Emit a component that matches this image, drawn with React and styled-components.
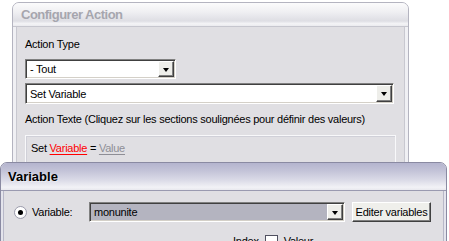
import React from 'react';
import styled, { createGlobalStyle } from 'styled-components';

const GlobalStyle = createGlobalStyle`
  html, body {
    margin: 0;
    padding: 0;
    background: #ffffff;
    overflow: hidden;
  }
  body {
    font-family: 'Liberation Sans', Arial, sans-serif;
    font-size: 11px;
    letter-spacing: -0.25px;
    color: #000;
  }
`;

const Desktop = styled.div`
  position: relative;
  width: 449px;
  height: 241px;
  overflow: hidden;
  background: #ffffff;
`;

// windows sit on a free desktop, so their place is the content itself
const Window = styled.div`
  position: absolute;
  left: ${p => p.$x}px;
  top: ${p => p.$y}px;
  width: ${p => p.$w}px;
  height: ${p => p.$h}px;
  display: flex;
  flex-direction: column;
  box-sizing: border-box;
  border: 1px solid ${p => (p.$active ? '#8a8aa2' : '#b4b4c0')};
  border-radius: 7px 7px 0 0;
  background: ${p => (p.$active ? '#e4e4ec' : '#f0f0f4')};
  overflow: hidden;
`;

const TitleBar = styled.div`
  flex: 0 0 ${p => p.$h}px;
  display: flex;
  align-items: center;
  padding-left: ${p => p.$pad}px;
  font-weight: bold;
  font-size: 13px;
  letter-spacing: ${p => (p.$active ? '0px' : '-0.5px')};
  color: ${p => (p.$active ? '#000000' : '#a6a6ae')};
  text-shadow: ${p => (p.$active ? '1px 1px 0 rgba(255,255,255,0.4)' : 'none')};
  background: ${p =>
    p.$active
      ? 'linear-gradient(#b4b4ce 0%, #c4c4d8 30%, #dcdce8 65%, #f2f2f6 90%, #e8e8ee 100%)'
      : 'linear-gradient(#fbfbfc 0%, #efeff2 40%, #dedee4 78%, #f4f4f6 90%, #eaeaee 100%)'};
  border-bottom: 1px solid ${p => (p.$active ? '#9a9ab0' : '#c6c6ce')};
`;

const Frame = styled.div`
  flex: 1;
  display: flex;
  padding: 0 ${p => p.$side}px;
`;

const Body = styled.div`
  flex: 1;
  display: flex;
  flex-direction: column;
  background: #e0dfe3;
  border-left: 1px solid ${p => (p.$active ? '#b8b8c8' : '#c8c8d0')};
  border-right: 1px solid ${p => (p.$active ? '#b8b8c8' : '#c8c8d0')};
  padding: ${p => p.$pad};
`;

const Label = styled.div`
  height: 13px;
  line-height: 13px;
  margin-top: ${p => p.$mt || 0}px;
  white-space: nowrap;
`;

const Combo = styled.div`
  display: flex;
  align-items: stretch;
  box-sizing: border-box;
  width: ${p => p.$w}px;
  height: ${p => p.$h}px;
  margin-top: ${p => p.$mt || 0}px;
  background: ${p => p.$bg || '#ffffff'};
  border: 1px solid;
  border-color: #808080 #ffffff #ffffff #808080;
  box-shadow: inset 1px 1px 0 #404040, inset -1px -1px 0 #d4d0c8;
  padding: 1px;
`;

const ComboText = styled.div`
  flex: 1;
  display: flex;
  align-items: center;
  padding-left: 3px;
  white-space: nowrap;
`;

const DropButton = styled.div`
  flex: 0 0 16px;
  display: flex;
  align-items: center;
  justify-content: center;
  box-sizing: border-box;
  background: #eeeeea;
  border: 1px solid;
  border-color: #ffffff #404040 #404040 #ffffff;
  box-shadow: inset -1px -1px 0 #808080;
  &::after {
    content: '';
    width: 0;
    height: 0;
    border-left: 3.5px solid transparent;
    border-right: 3.5px solid transparent;
    border-top: 4px solid #000;
    margin-top: 1px;
  }
`;

const TextBox = styled.div`
  margin-top: 9px;
  height: 140px;
  border: 1px solid #f8f8fa;
  box-shadow: inset 1px 1px 0 #d0d0d8;
  padding: 6px 5px;
  line-height: 13px;
  white-space: nowrap;
`;

const Link = styled.span`
  color: ${p => p.$color};
  text-decoration: underline;
  text-underline-offset: 2px;
`;

const Row = styled.div`
  display: flex;
  align-items: center;
  margin-top: ${p => p.$mt || 0}px;
  margin-left: ${p => p.$ml || 0}px;
  gap: ${p => p.$gap || 0}px;
`;

const Radio = styled.div`
  width: 13px;
  height: 13px;
  box-sizing: border-box;
  border-radius: 50%;
  border: 1px solid #9c9cac;
  background: radial-gradient(circle at 40% 40%, #ffffff 0%, #ffffff 55%, #dcdce2 100%);
  display: flex;
  align-items: center;
  justify-content: center;
  &::after {
    content: '';
    width: 5px;
    height: 5px;
    border-radius: 50%;
    background: #000;
  }
`;

const FieldLabel = styled.div`
  width: ${p => p.$w}px;
  margin-left: 5px;
  white-space: nowrap;
`;

const Button = styled.div`
  box-sizing: border-box;
  width: ${p => p.$w}px;
  height: 20px;
  display: flex;
  align-items: center;
  justify-content: center;
  background: #efefeb;
  border: 1px solid;
  border-color: #ffffff #404040 #404040 #ffffff;
  box-shadow: inset -1px -1px 0 #808080;
  white-space: nowrap;
`;

const Check = styled.div`
  width: 13px;
  height: 13px;
  box-sizing: border-box;
  border: 1px solid #505060;
  background: #ffffff;
`;

export default function App() {
  return (
    <>
      <GlobalStyle />
      <Desktop>
        <Window $x={12} $y={2} $w={397} $h={280}>
          <TitleBar $h={23} $pad={8}>Configurer Action</TitleBar>
          <Frame $side={3}>
            <Body $pad="11px 8px 0 8px">
              <Label>Action Type</Label>
              <Combo $w={151} $h={20} $mt={8}>
                <ComboText>- Tout</ComboText>
                <DropButton />
              </Combo>
              <Combo $w={369} $h={21} $mt={4}>
                <ComboText>Set Variable</ComboText>
                <DropButton />
              </Combo>
              <Label $mt={9}>Action Texte (Cliquez sur les sections soulignées pour définir des valeurs)</Label>
              <TextBox>
                Set <Link $color="#ff0000">Variable</Link> = <Link $color="#8e8e96">Value</Link>
              </TextBox>
            </Body>
          </Frame>
        </Window>

        <Window $x={0} $y={162} $w={447} $h={120} $active>
          <TitleBar $h={27} $pad={7} $active>Variable</TitleBar>
          <Frame $side={2}>
            <Body $pad="11px 0 0 10px" $active>
              <Row>
                <Radio />
                <FieldLabel $w={57}>Variable:</FieldLabel>
                <Combo $w={256} $h={20} $bg="#b4b4c0">
                  <ComboText>monunite</ComboText>
                  <DropButton />
                </Combo>
                <Row $ml={7}>
                  <Button $w={79}>Editer variables</Button>
                </Row>
              </Row>
              <Row $mt={13} $ml={219} $gap={6}>
                <Label>Index</Label>
                <Check />
                <Label>Valeur</Label>
              </Row>
            </Body>
          </Frame>
        </Window>
      </Desktop>
    </>
  );
}
